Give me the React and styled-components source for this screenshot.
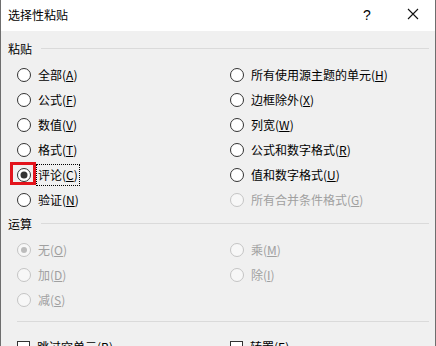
import styled, { createGlobalStyle, css } from "styled-components";

const GlobalStyle = createGlobalStyle`
    html, body {
        margin: 0;
        padding: 0;
        width: 436px;
        height: 346px;
        overflow: hidden;
        background: #f0f0f0;
    }
    body {
        font-family: "Microsoft YaHei", "Noto Sans CJK SC", "Noto Sans", sans-serif;
        font-size: 12px;
        color: #000;
    }
`;

const pasteLeft = [
    { text: "全部", key: "A" },
    { text: "公式", key: "F" },
    { text: "数值", key: "V" },
    { text: "格式", key: "T" },
    { text: "评论", key: "C", checked: true, focus: true },
    { text: "验证", key: "N" },
];

const pasteRight = [
    { text: "所有使用源主题的单元", key: "H" },
    { text: "边框除外", key: "X" },
    { text: "列宽", key: "W" },
    { text: "公式和数字格式", key: "R" },
    { text: "值和数字格式", key: "U" },
    { text: "所有合并条件格式", key: "G", disabled: true },
];

const opRows = [
    [
        { text: "无", key: "O", checked: true, disabled: true },
        { text: "乘", key: "M", disabled: true },
    ],
    [
        { text: "加", key: "D", disabled: true },
        { text: "除", key: "I", disabled: true },
    ],
    [{ text: "减", key: "S", disabled: true }, null],
];

function Option({ item }) {
    if (!item) return <span />;
    const { text, key, checked, disabled, focus } = item;
    return (
        <OptionRow $disabled={disabled}>
            <RadioWrap $highlight={focus}>
                <Radio $checked={checked} $disabled={disabled} />
            </RadioWrap>
            <Label $focus={focus}>
                {text}(<u>{key}</u>)
            </Label>
        </OptionRow>
    );
}

function App() {
    const pasteRows = pasteLeft.map((l, i) => [l, pasteRight[i]]);
    return (
        <>
            <GlobalStyle />
            <Window>
                <TitleBar>
                    <Title>选择性粘贴</Title>
                    <Help>?</Help>
                    <Close>
                        <svg width="12" height="12" viewBox="0 0 12 12">
                            <path d="M1 1 L11 11 M11 1 L1 11" stroke="#111" strokeWidth="1.1" />
                        </svg>
                    </Close>
                </TitleBar>
                <Body>
                    <GroupHeader>
                        <span>粘贴</span>
                        <Line />
                    </GroupHeader>
                    <OptionGrid>
                        {pasteRows.map(([l, r], i) => (
                            <Row key={i}>
                                <Option item={l} />
                                <Option item={r} />
                            </Row>
                        ))}
                    </OptionGrid>
                    <GroupHeader $gap={3}>
                        <span>运算</span>
                        <Line />
                    </GroupHeader>
                    <OptionGrid>
                        {opRows.map(([l, r], i) => (
                            <Row key={i}>
                                <Option item={l} />
                                <Option item={r} />
                            </Row>
                        ))}
                    </OptionGrid>
                    <Divider />
                    <Row>
                        <OptionRow>
                            <Checkbox />
                            <Label>
                                跳过空单元(<u>B</u>)
                            </Label>
                        </OptionRow>
                        <OptionRow>
                            <Checkbox />
                            <Label>
                                转置(<u>E</u>)
                            </Label>
                        </OptionRow>
                    </Row>
                </Body>
            </Window>
        </>
    );
}

const Window = styled.div`
    width: 436px;
    height: 346px;
    box-sizing: border-box;
    border-left: 1px solid #6e6e6e;
    border-right: 1px solid #6e6e6e;
    background: #f0f0f0;
    display: flex;
    flex-direction: column;
    overflow: hidden;
`;

const TitleBar = styled.div`
    height: 31px;
    flex-shrink: 0;
    background: #fff;
    display: flex;
    align-items: center;
    padding-left: 7px;
`;

const Title = styled.div`
    flex: 1;
    font-size: 12px;
    line-height: 16px;
    margin-top: -1px;
`;

const Help = styled.div`
    width: 14px;
    margin-right: 33px;
    font-family: "Liberation Sans", sans-serif;
    font-size: 14px;
    text-align: center;
    margin-top: -2px;
`;

const Close = styled.div`
    width: 12px;
    height: 12px;
    margin-right: 16px;
    margin-top: -3px;
    display: flex;
`;

const Body = styled.div`
    padding: 0 6px 0 7px;
`;

const GroupHeader = styled.div`
    display: flex;
    align-items: center;
    height: 18px;
    margin-top: ${({ $gap }) => ($gap ?? 9)}px;
    line-height: 18px;

    span {
        margin-right: 9px;
    }
`;

const Line = styled.div`
    flex: 1;
    height: 1px;
    background: #dadada;
    margin-top: -1px;
`;

const OptionGrid = styled.div`
    display: flex;
    flex-direction: column;
    margin-top: 4px;
`;

const Row = styled.div`
    display: grid;
    grid-template-columns: 213px 1fr;
    height: 25px;
    align-items: center;
    padding-left: 9px;
`;

const OptionRow = styled.div`
    display: flex;
    align-items: center;
    height: 25px;
    color: ${({ $disabled }) => ($disabled ? "#a0a0a0" : "#000")};
`;

const RadioWrap = styled.div`
    position: relative;
    width: 14px;
    height: 14px;
    display: flex;
    ${({ $highlight }) =>
        $highlight &&
        css`
            &::before {
                content: "";
                position: absolute;
                left: -7px;
                top: -6px;
                width: 20px;
                height: 17px;
                border: 3px solid #e3141c;
            }
        `}
`;

const Radio = styled.div`
    position: relative;
    box-sizing: border-box;
    width: 14px;
    height: 14px;
    border-radius: 50%;
    border: 1px solid ${({ $disabled }) => ($disabled ? "#c4c4c4" : "#333")};
    background: ${({ $disabled }) => ($disabled ? "#f7f7f7" : "#fff")};

    ${({ $checked, $disabled }) =>
        $checked &&
        css`
            &::after {
                content: "";
                position: absolute;
                left: 50%;
                top: 50%;
                width: ${$disabled ? 6 : 7}px;
                height: ${$disabled ? 6 : 7}px;
                transform: translate(-50%, -50%);
                border-radius: 50%;
                background: ${$disabled ? "#bcbcbc" : "#333"};
            }
        `}
`;

const Label = styled.span`
    margin-left: 5px;
    line-height: 16px;
    white-space: nowrap;
    padding: 2px 1px;
    border: 1px dotted ${({ $focus }) => ($focus ? "#000" : "transparent")};

    u {
        text-underline-offset: 1px;
    }
`;

const Divider = styled.div`
    height: 1px;
    background: #dadada;
    margin: 9px 0 12px 9px;
`;

const Checkbox = styled.div`
    box-sizing: border-box;
    width: 13px;
    height: 13px;
    border: 1px solid #333;
    background: #fff;
    margin-top: 1px;
`;

export default App;
